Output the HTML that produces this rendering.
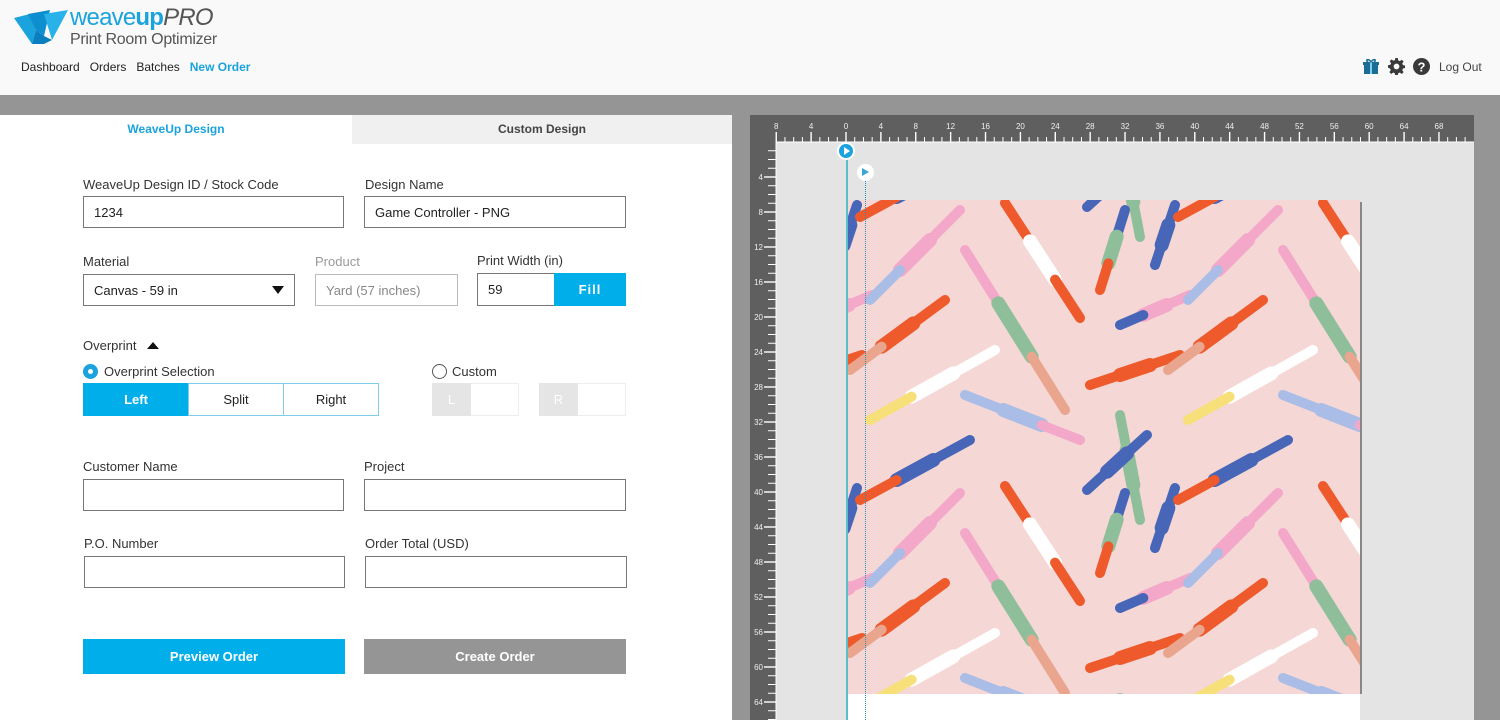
<!DOCTYPE html>
<html><head><meta charset="utf-8">
<style>
*{box-sizing:border-box;margin:0;padding:0}
html,body{width:1500px;height:720px;overflow:hidden}
body{background:#fff;font-family:"Liberation Sans",Arial,sans-serif;color:#333;position:relative}
.a{position:absolute}
.lbl{position:absolute;font-size:13px;color:#333}
.inp{position:absolute;border:1px solid #777;background:#fff;font-size:13px;color:#222;padding-left:10px;display:flex;align-items:center}
.btn{position:absolute;display:flex;align-items:center;justify-content:center;font-size:13px;font-weight:bold;color:#fff}
</style></head><body>
<div class="a" style="left:0;top:0;width:1500px;height:95px;background:#f9f9f9"></div>
<svg class="a" style="left:14px;top:10px" width="56" height="36" viewBox="0 0 56 36">
<polygon points="0,8 16,4 22,20 18,34" fill="#1aa3dd"/>
<polygon points="14,4 36,0 30,26 22,20" fill="#0d8fcf"/>
<polygon points="30,4 54,0 38,30" fill="#29b1ea"/>
<polygon points="18,34 22,20 30,26 38,30 30,34" fill="#0a7fbf"/>
</svg>
<div class="a" style="left:70px;top:4px;font-size:24px;color:#1aa3dd;letter-spacing:-0.8px">weave<b style="font-weight:bold">up</b><i style="color:#555">PRO</i></div>
<div class="a" style="left:70px;top:31px;font-size:16px;color:#555;letter-spacing:-0.3px">Print Room Optimizer</div>
<div class="a" style="left:21px;top:60px;font-size:12px;color:#222">Dashboard&nbsp;&nbsp; Orders&nbsp;&nbsp; Batches&nbsp;&nbsp; <span style="color:#1aa3dd;font-weight:bold">New Order</span></div>
<svg class="a" style="left:1362px;top:58px" width="18" height="17" viewBox="0 0 18 17"><rect x="2" y="5" width="14" height="11" fill="#1b6d95"/><rect x="1" y="4" width="16" height="3" fill="#1b6d95"/><rect x="8" y="4" width="2" height="12" fill="#7fd0f0"/><path d="M9 4 C6 0 3 2 6 4 M9 4 C12 0 15 2 12 4" stroke="#1b6d95" stroke-width="1.5" fill="none"/></svg>
<svg class="a" style="left:1388px;top:58px" width="17" height="17" viewBox="0 0 16 16"><path fill="#3a3a3a" d="M6.8 0h2.4l.4 2.2 1.5.7 1.9-1.3 1.7 1.7-1.3 1.9.7 1.5 2.2.4v2.4l-2.2.4-.7 1.5 1.3 1.9-1.7 1.7-1.9-1.3-1.5.7-.4 2.2H6.8l-.4-2.2-1.5-.7-1.9 1.3-1.7-1.7 1.3-1.9-.7-1.5L0 9.2V6.8l2.2-.4.7-1.5-1.3-1.9 1.7-1.7 1.9 1.3 1.5-.7zM8 5.3A2.7 2.7 0 1 0 8 10.7 2.7 2.7 0 1 0 8 5.3z"/></svg>
<svg class="a" style="left:1413px;top:58px" width="17" height="17" viewBox="0 0 16 16"><circle cx="8" cy="8" r="8" fill="#3a3a3a"/><text x="8" y="12.5" font-size="12" font-weight="bold" text-anchor="middle" fill="#fff" font-family="Liberation Sans">?</text></svg>
<div class="a" style="left:1439px;top:60px;font-size:12px;color:#444">Log Out</div>
<div class="a" style="left:0;top:95px;width:1500px;height:20px;background:#959595"></div>
<div class="a" style="left:732px;top:115px;width:768px;height:605px;background:#959595"></div>
<div class="a" style="left:0;top:115px;width:352px;height:29px;background:#fff;color:#1aa3dd;font-size:12px;font-weight:bold;text-align:center;line-height:29px">WeaveUp Design</div>
<div class="a" style="left:352px;top:115px;width:380px;height:29px;background:#f1f0f0;color:#444;font-size:12px;font-weight:bold;text-align:center;line-height:29px">Custom Design</div>
<div class="lbl" style="left:83px;top:177px">WeaveUp Design ID / Stock Code</div>
<div class="inp" style="left:83px;top:196px;width:261px;height:32px">1234</div>
<div class="lbl" style="left:365px;top:177px">Design Name</div>
<div class="inp" style="left:364px;top:196px;width:262px;height:32px">Game Controller - PNG</div>
<div class="lbl" style="left:83px;top:254px">Material</div>
<div class="inp" style="left:83px;top:274px;width:212px;height:32px">Canvas - 59 in<span style="position:absolute;right:10px;top:11px;border-left:6px solid transparent;border-right:6px solid transparent;border-top:8px solid #111"></span></div>
<div class="lbl" style="left:315px;top:254px;color:#999">Product</div>
<div class="inp" style="left:315px;top:274px;width:143px;height:32px;border-color:#bbb;color:#888">Yard (57 inches)</div>
<div class="lbl" style="left:477px;top:253px">Print Width (in)</div>
<div class="inp" style="left:477px;top:273px;width:78px;height:33px">59</div>
<div class="btn" style="left:554px;top:273px;width:72px;height:33px;background:#00aeea;letter-spacing:1px">Fill</div>
<div class="lbl" style="left:83px;top:338px">Overprint</div>
<div class="a" style="left:147px;top:342px;border-left:6px solid transparent;border-right:6px solid transparent;border-bottom:7px solid #111"></div>
<div class="a" style="left:83px;top:364px;width:15px;height:15px;border-radius:50%;background:#1aa3dd"><div style="margin:5px;width:5px;height:5px;border-radius:50%;background:#fff"></div></div>
<div class="lbl" style="left:104px;top:364px">Overprint Selection</div>
<div class="btn" style="left:83px;top:383px;width:106px;height:33px;background:#00aeea">Left</div>
<div class="btn" style="left:188px;top:383px;width:96px;height:33px;border:1px solid #7fcde8;color:#222;font-weight:normal">Split</div>
<div class="btn" style="left:283px;top:383px;width:96px;height:33px;border:1px solid #7fcde8;color:#222;font-weight:normal">Right</div>
<div class="a" style="left:432px;top:364px;width:15px;height:15px;border-radius:50%;border:1px solid #555"></div>
<div class="lbl" style="left:452px;top:364px">Custom</div>
<div class="a" style="left:432px;top:383px;width:87px;height:33px;border:1px solid #eee"></div>
<div class="btn" style="left:432px;top:383px;width:39px;height:33px;background:#e5e5e5;font-weight:normal">L</div>
<div class="a" style="left:539px;top:383px;width:87px;height:33px;border:1px solid #eee"></div>
<div class="btn" style="left:539px;top:383px;width:39px;height:33px;background:#e5e5e5;font-weight:normal">R</div>
<div class="lbl" style="left:83px;top:459px">Customer Name</div>
<div class="inp" style="left:83px;top:479px;width:261px;height:32px"></div>
<div class="lbl" style="left:364px;top:459px">Project</div>
<div class="inp" style="left:364px;top:479px;width:262px;height:32px"></div>
<div class="lbl" style="left:84px;top:536px">P.O. Number</div>
<div class="inp" style="left:84px;top:556px;width:261px;height:32px"></div>
<div class="lbl" style="left:365px;top:536px">Order Total (USD)</div>
<div class="inp" style="left:365px;top:556px;width:262px;height:32px"></div>
<div class="btn" style="left:83px;top:639px;width:262px;height:35px;background:#00aeea">Preview Order</div>
<div class="btn" style="left:364px;top:639px;width:262px;height:35px;background:#959595">Create Order</div>
<div class="a" style="left:750px;top:115px;width:724px;height:605px;background:#5f5f5f"></div>
<div class="a" style="left:776px;top:142px;width:698px;height:578px;background:#e4e4e4"></div>
<div class="a" style="left:847px;top:694px;width:513px;height:26px;background:#fff"></div>
<div class="a" style="left:1360px;top:202px;width:2px;height:492px;background:#888"></div>
<svg id="pat" class="a" style="left:847px;top:200px" width="513" height="494"></svg>
<svg id="rul" class="a" style="left:750px;top:115px" width="724" height="605"></svg>
<div class="a" style="left:846px;top:142px;width:2px;height:578px;background:#5bbccc"></div>
<div class="a" style="left:865px;top:172px;width:0;height:548px;border-left:1px dotted #2a8fb0"></div>
<div class="a" style="left:837px;top:142px;width:18px;height:18px;border-radius:50%;background:#1aa3dd;border:2px solid #fff"><div style="position:absolute;left:5px;top:3px;border-top:4px solid transparent;border-bottom:4px solid transparent;border-left:6px solid #fff"></div></div>
<div class="a" style="left:857px;top:164px;width:17px;height:17px;border-radius:50%;background:#fff"><div style="position:absolute;left:5px;top:4px;border-top:4.5px solid transparent;border-bottom:4.5px solid transparent;border-left:7px solid #3aa6d6"></div></div>
<script>
var NS="http://www.w3.org/2000/svg";
function el(p,t,a){var e=document.createElementNS(NS,t);for(var k in a)e.setAttribute(k,a[k]);p.appendChild(e);return e;}
var r=document.getElementById('rul');
var px=8.72;
for(var i=-8;i<=72;i++){var x=96+i*px;if(x<26||x>722)continue;var big=i%4==0;
el(r,'line',{x1:x,x2:x,y1:big?17:22,y2:27,stroke:'#fff','stroke-width':big?1.4:1});
if(big){var t=el(r,'text',{x:x,y:14,'font-size':8,fill:'#eee','text-anchor':'middle','font-family':'Liberation Sans'});t.textContent=Math.abs(i);}}
el(r,'line',{x1:26,x2:724,y1:27,y2:27,stroke:'#fff'});
for(var j=1;j<=68;j++){var y=27+j*8.75;if(y>605)break;var big=j%4==0;
el(r,'line',{x1:big?14:18,x2:26,y1:y,y2:y,stroke:'#fff','stroke-width':big?1.4:1});
if(big){var t=el(r,'text',{x:13,y:y+3,'font-size':8,fill:'#eee','text-anchor':'end','font-family':'Liberation Sans'});t.textContent=j;}}
el(r,'line',{x1:26,x2:26,y1:27,y2:605,stroke:'#fff'});
var p=document.getElementById('pat');
el(p,'rect',{x:0,y:0,width:513,height:494,fill:'#f5d7d5'});
var R='#ee5a2c',W='#fff',P='#f4a8c9',G='#8fbf9a',T='#e9a58e',L='#a9bde6',B='#4866b8',Y='#f7e07a';
var S=[[158,3,233,118,[R,W,R]],[118,50,218,210,[P,G,T]],[113,10,23,100,[P,P,L]],[98,100,3,170,[R,R,T]],[148,150,23,220,[W,W,Y]],[118,195,233,240,[L,L,P]],[278,10,253,90,[B,G,R]],[328,5,308,65,[B,B,B]],[343,95,273,125,[P,P,B]],[333,155,243,185,[R,R,R]],[123,240,13,300,[B,B,R]],[273,215,293,320,[G,G,G]],[300,235,240,290,[B,B,B]]];
var TW=318,TH=283;
for(var ox=-1;ox<=2;ox++)for(var oy=-1;oy<=2;oy++)S.forEach(function(s){
var x1=s[0]+ox*TW,y1=s[1]+oy*TH,x2=s[2]+ox*TW,y2=s[3]+oy*TH;
for(var k=0;k<3;k++){var a=k/3,b=(k+1)/3;
el(p,'line',{x1:x1+(x2-x1)*a,y1:y1+(y2-y1)*a,x2:x1+(x2-x1)*b,y2:y1+(y2-y1)*b,stroke:s[4][k],'stroke-width':k==1?14:10,'stroke-linecap':'round'});}});
</script>
</body></html>
